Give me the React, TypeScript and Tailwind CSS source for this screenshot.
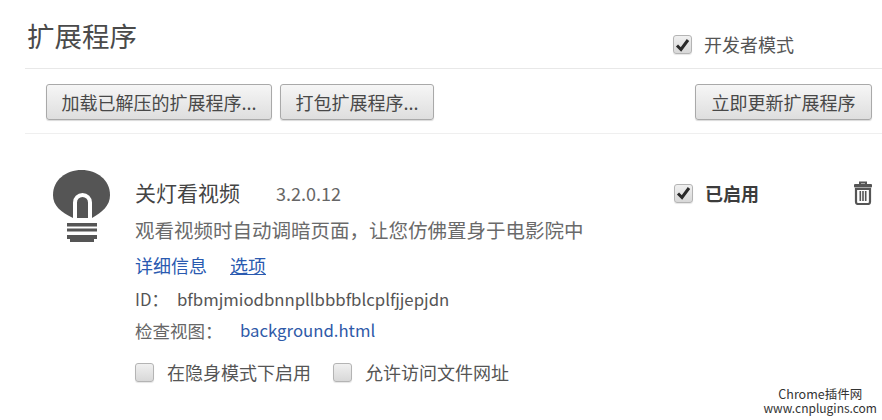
import React from 'react';

const font = { fontFamily: '"Noto Sans CJK SC", "Noto Sans", sans-serif' };

const Checkbox = ({ checked = false }: { checked?: boolean }) => (
  <span className="flex h-[19px] w-[19px] shrink-0 items-center justify-center rounded-[3px] border border-[#b4b4b4] bg-gradient-to-b from-[#f0f0f0] to-[#d8d8d8] shadow-[0_1px_1px_rgba(0,0,0,0.1)]">
    {checked && (
      <svg width="15" height="14" viewBox="0 0 15 14">
        <path d="M2 7.5 L6 11.5 L13 2" fill="none" stroke="#2a2a2a" strokeWidth="3" />
      </svg>
    )}
  </span>
);

const Button = ({ label, width }: { label: string; width: string }) => (
  <button
    className={`flex h-[36px] items-center justify-center rounded-[3px] border border-[#a9a9a9] bg-gradient-to-b from-[#f6f6f6] to-[#dedede] text-[18px] text-[#484848] shadow-[0_1px_1px_rgba(0,0,0,0.15)] ${width}`}
  >
    {label}
  </button>
);

const BulbIcon = () => (
  <svg width="58" height="74" viewBox="0 0 58 74" className="shrink-0">
    <path d="M20 48 C8 42 0 36 0 25 C0 10 13 0 28.5 0 C44 0 57 10 57 25 C57 36 49 42 39 48 Z" fill="#555555" />
    <path d="M22 48 V32.5 A7.5 7.5 0 0 1 37 32.5 V48" fill="none" stroke="#ffffff" strokeWidth="4" />
    <rect x="14" y="53" width="30" height="3.5" fill="#555555" />
    <rect x="14" y="58.5" width="30" height="3" fill="#555555" />
    <path d="M14 65 H44 V69 H41 V72 H17 V69 H14 Z" fill="#555555" />
  </svg>
);

const TrashIcon = () => (
  <svg width="20" height="24" viewBox="0 0 20 24" className="shrink-0">
    <path d="M7 3 V1.5 H13 V3" fill="none" stroke="#555555" strokeWidth="2" />
    <rect x="1" y="3" width="18" height="3.5" rx="1" fill="#555555" />
    <path d="M3 8 H17 V21 A2 2 0 0 1 15 23 H5 A2 2 0 0 1 3 21 Z" fill="none" stroke="#555555" strokeWidth="2.2" />
    <path d="M7.3 10 V20 M10 10 V20 M12.7 10 V20" stroke="#555555" strokeWidth="1.6" />
  </svg>
);

export default function App() {
  return (
    <div className="relative h-[420px] w-[882px] overflow-hidden bg-white pl-[25px]" style={font}>
      <header className="flex h-[69px] items-start justify-between border-b border-[#e8e8e8]">
        <h1 className="mt-[17px] pl-[2px] text-[27.5px] leading-[36px] font-normal text-[#4a4a4a]">扩展程序</h1>
        <label className="mt-[35px] mr-[88px] flex items-center gap-[12px] text-[18px] leading-[20px] text-[#555555]">
          <Checkbox checked />
          <span className="mt-[-2px]">开发者模式</span>
        </label>
      </header>

      <div className="flex h-[65px] items-start justify-between border-b border-[#efefef] pt-[15px] pr-[10px] pl-[21px]">
        <div className="flex gap-[8px]">
          <Button label="加载已解压的扩展程序..." width="w-[226px]" />
          <Button label="打包扩展程序..." width="w-[154px]" />
        </div>
        <Button label="立即更新扩展程序" width="w-[177px]" />
      </div>

      <section className="flex items-start pt-[36px] pl-[28px]">
        <BulbIcon />
        <div className="mt-[11px] ml-[24px] flex w-[539px] flex-col">
          <div className="flex h-[24px] items-center">
            <span className="w-[141px] text-[21px] text-[#444444]">关灯看视频</span>
            <span className="text-[18px] text-[#666666]">3.2.0.12</span>
          </div>
          <p className="mt-[13px] h-[24px] text-[19.5px] leading-[24px] whitespace-nowrap text-[#6a6a6a]">观看视频时自动调暗页面，让您仿佛置身于电影院中</p>
          <div className="mt-[11px] flex h-[24px] gap-[23px] text-[18px] leading-[24px]">
            <a className="text-[#2a5ab0]">详细信息</a>
            <a className="text-[#2a5ab0] underline">选项</a>
          </div>
          <p className="mt-[10px] flex h-[24px] text-[16.75px] leading-[24px] whitespace-nowrap text-[#555555]">
            <span className="w-[42px]">ID：</span>
            <span>bfbmjmiodbnnpllbbbfblcplfjjepjdn</span>
          </p>
          <p className="mt-[8px] flex h-[24px] items-center text-[17.5px] whitespace-nowrap text-[#666666]">
            <span className="w-[105px]">检查视图：</span>
            <a className="text-[16.75px] text-[#2f5aa8]">background.html</a>
          </p>
          <div className="mt-[17px] flex items-center text-[18px] leading-[24px] text-[#555555]">
            <Checkbox />
            <span className="mr-[22px] ml-[13px]">在隐身模式下启用</span>
            <Checkbox />
            <span className="ml-[13px]">允许访问文件网址</span>
          </div>
        </div>
        <label className="mt-[13px] flex items-center gap-[12px] text-[18px] leading-[20px] font-bold text-[#3c3c3c]">
          <Checkbox checked />
          已启用
        </label>
        <div className="mt-[11px] ml-[94px]">
          <TrashIcon />
        </div>
      </section>

      <div className="absolute right-[5px] bottom-[5px] text-center text-[#333333]">
        <div className="text-[12.5px] leading-[14px]">Chrome插件网</div>
        <div className="text-[12px] leading-[14px]">www.cnplugins.com</div>
      </div>
    </div>
  );
}
